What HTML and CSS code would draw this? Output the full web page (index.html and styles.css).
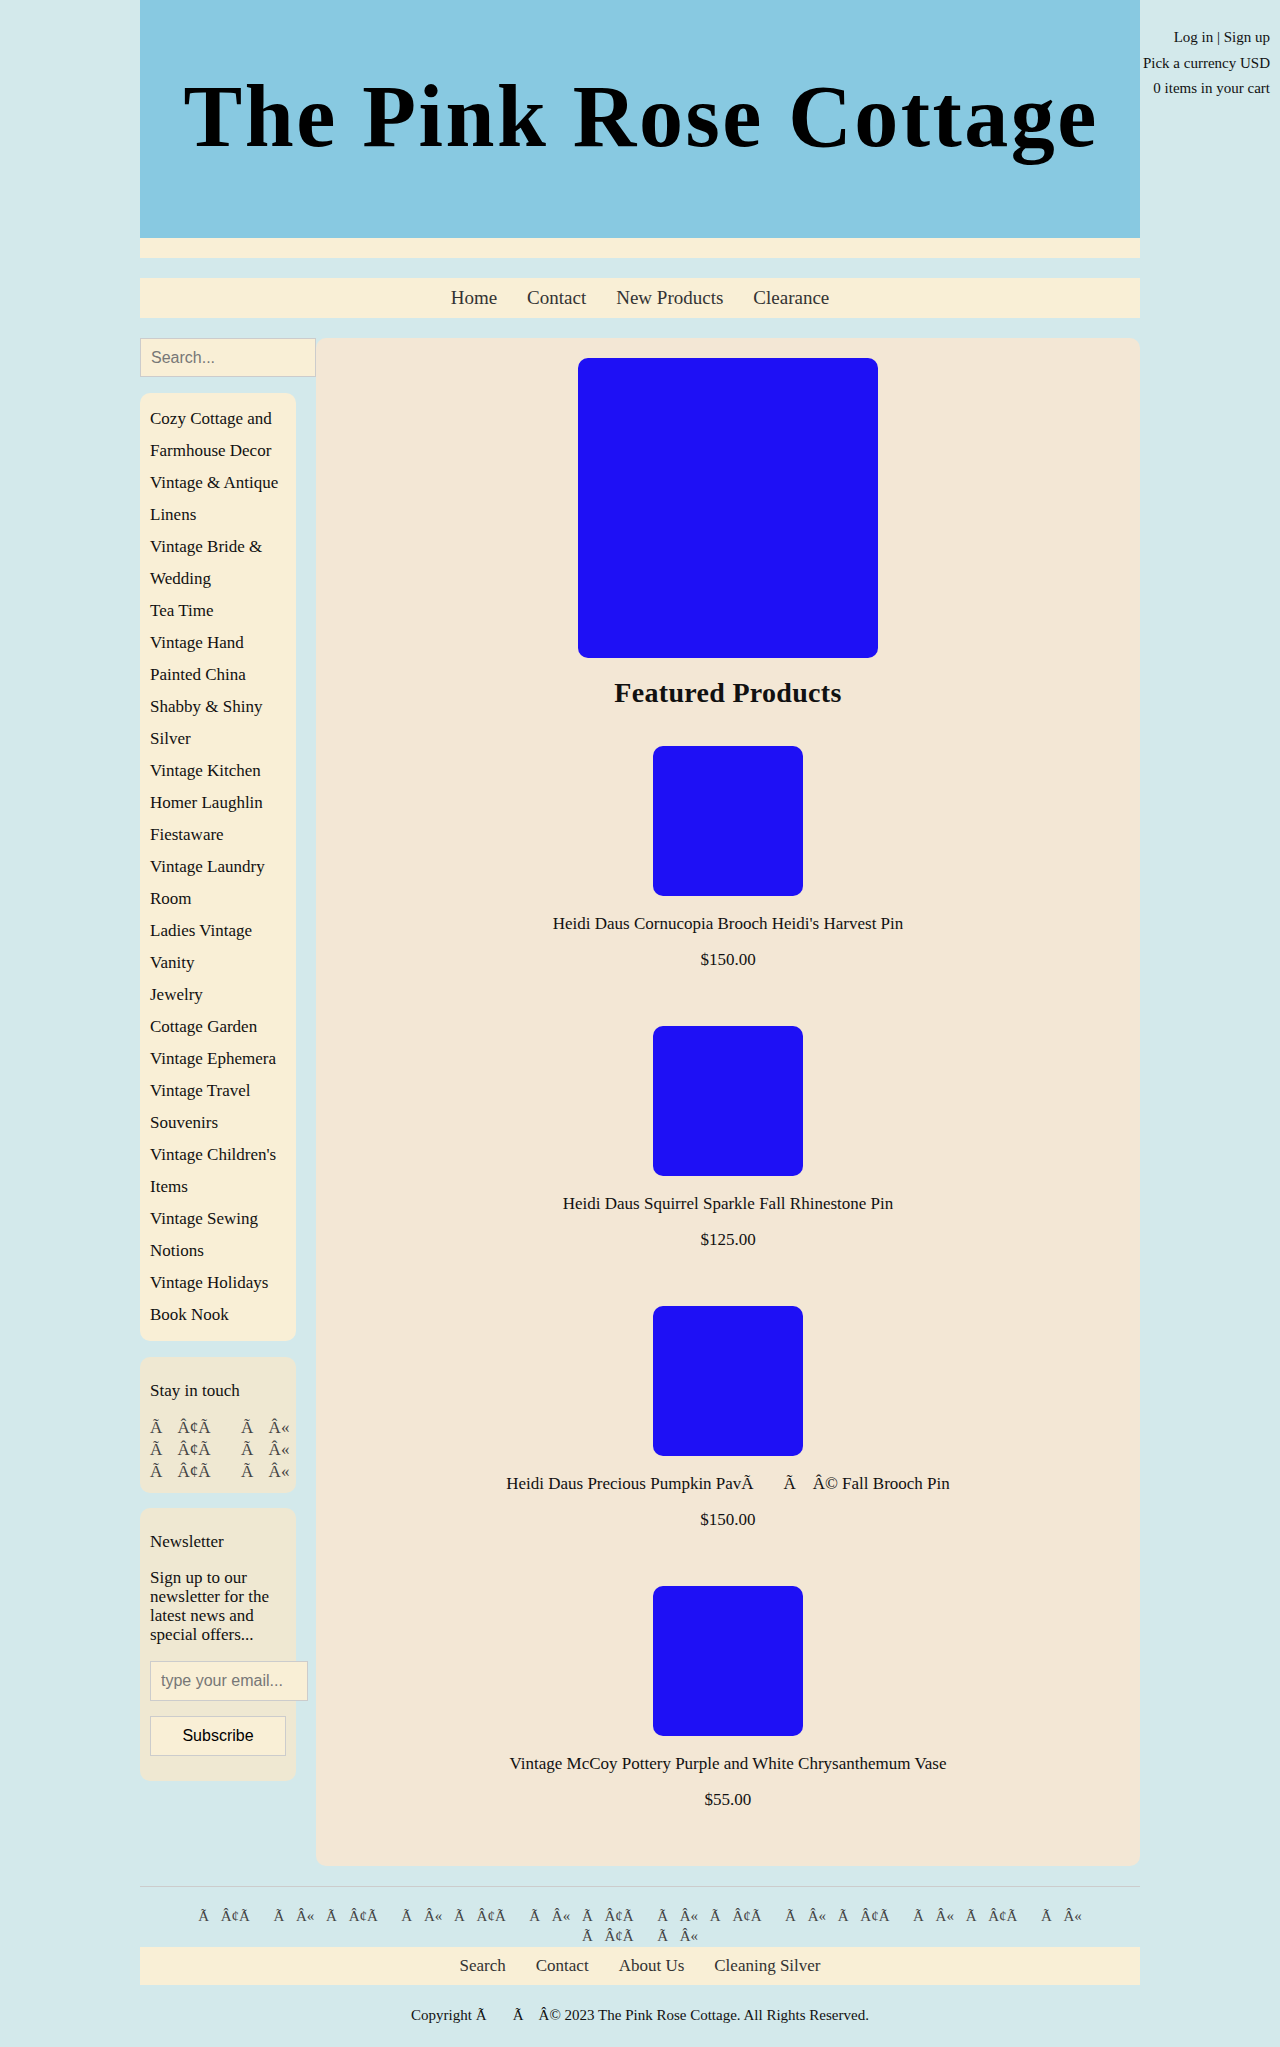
FILE: index.html
```html
<!DOCTYPE html>
<html lang="en">
<head>
<meta charset="utf-8">
<title>The Pink Rose Cottage</title>
<link rel="stylesheet" href="styles.css">
</head>
<body>
<div class="account">
  <p><a href="#">Log in</a> | <a href="#">Sign up</a></p>
  <p>Pick a currency USD</p>
  <p>0 items in your cart</p>
</div>
<div class="page">
  <header class="masthead">
    <div class="banner"><h1 class="site-title">The Pink Rose Cottage</h1></div>
    <div class="strip"></div>
  </header>
  <nav class="topnav">
    <a href="#">Home</a>
    <a href="#">Contact</a>
    <a href="#">New Products</a>
    <a href="#">Clearance</a>
  </nav>
  <div class="layout">
    <aside class="sidebar">
      <input class="search" type="text" placeholder="Search...">
      <ul class="box cats">
        <li><a href="#">Cozy Cottage and Farmhouse Decor</a></li>
        <li><a href="#">Vintage &amp; Antique Linens</a></li>
        <li><a href="#">Vintage Bride &amp; Wedding</a></li>
        <li><a href="#">Tea Time</a></li>
        <li><a href="#">Vintage Hand Painted China</a></li>
        <li><a href="#">Shabby &amp; Shiny Silver</a></li>
        <li><a href="#">Vintage Kitchen</a></li>
        <li><a href="#">Homer Laughlin Fiestaware</a></li>
        <li><a href="#">Vintage Laundry Room</a></li>
        <li><a href="#">Ladies Vintage Vanity</a></li>
        <li><a href="#">Jewelry</a></li>
        <li><a href="#">Cottage Garden</a></li>
        <li><a href="#">Vintage Ephemera</a></li>
        <li><a href="#">Vintage Travel Souvenirs</a></li>
        <li><a href="#">Vintage Children's Items</a></li>
        <li><a href="#">Vintage Sewing Notions</a></li>
        <li><a href="#">Vintage Holidays</a></li>
        <li><a href="#">Book Nook</a></li>
      </ul>
      <section class="box alt">
        <h3 class="box-title">Stay in touch</h3>
        <div class="social">
          <a class="moj" href="#">Ã&nbsp;Â¢Ã&nbsp;&nbsp;Ã&nbsp;Â«</a>
          <a class="moj" href="#">Ã&nbsp;Â¢Ã&nbsp;&nbsp;Ã&nbsp;Â«</a>
          <a class="moj" href="#">Ã&nbsp;Â¢Ã&nbsp;&nbsp;Ã&nbsp;Â«</a>
        </div>
      </section>
      <section class="box alt newsletter">
        <h3 class="box-title">Newsletter</h3>
        <p class="news-text">Sign up to our newsletter for the latest news and special offers...</p>
        <input class="email" type="text" placeholder="type your email...">
        <button class="subscribe" type="button">Subscribe</button>
      </section>
    </aside>
    <main class="content">
      <div class="hero"></div>
      <h2 class="section-title">Featured Products</h2>
      <div class="product">
        <div class="thumb"></div>
        <p class="pname">Heidi Daus Cornucopia Brooch Heidi's Harvest Pin</p>
        <p class="price">$150.00</p>
      </div>
      <div class="product">
        <div class="thumb"></div>
        <p class="pname">Heidi Daus Squirrel Sparkle Fall Rhinestone Pin</p>
        <p class="price">$125.00</p>
      </div>
      <div class="product">
        <div class="thumb"></div>
        <p class="pname">Heidi Daus Precious Pumpkin PavÃ&nbsp;&nbsp;&nbsp;&nbsp;&nbsp;&nbsp;&nbsp;Ã&nbsp;&nbsp;&nbsp;&nbsp;Â© Fall Brooch Pin</p>
        <p class="price">$150.00</p>
      </div>
      <div class="product">
        <div class="thumb"></div>
        <p class="pname">Vintage McCoy Pottery Purple and White Chrysanthemum Vase</p>
        <p class="price">$55.00</p>
      </div>
    </main>
  </div>
  <footer class="site-footer">
    <div class="ficons"><span class="moj">Ã&nbsp;Â¢Ã&nbsp;&nbsp;Ã&nbsp;Â«</span> <span class="moj">Ã&nbsp;Â¢Ã&nbsp;&nbsp;Ã&nbsp;Â«</span> <span class="moj">Ã&nbsp;Â¢Ã&nbsp;&nbsp;Ã&nbsp;Â«</span> <span class="moj">Ã&nbsp;Â¢Ã&nbsp;&nbsp;Ã&nbsp;Â«</span> <span class="moj">Ã&nbsp;Â¢Ã&nbsp;&nbsp;Ã&nbsp;Â«</span> <span class="moj">Ã&nbsp;Â¢Ã&nbsp;&nbsp;Ã&nbsp;Â«</span> <span class="moj">Ã&nbsp;Â¢Ã&nbsp;&nbsp;Ã&nbsp;Â«</span> <span class="moj">Ã&nbsp;Â¢Ã&nbsp;&nbsp;Ã&nbsp;Â«</span></div>
    <nav class="fnav">
      <a href="#">Search</a>
      <a href="#">Contact</a>
      <a href="#">About Us</a>
      <a href="#">Cleaning Silver</a>
    </nav>
    <p class="copyright">Copyright Ã&nbsp;&nbsp;&nbsp;&nbsp;&nbsp;&nbsp;&nbsp;Ã&nbsp;&nbsp;&nbsp;&nbsp;Â© 2023 The Pink Rose Cottage. All Rights Reserved.</p>
  </footer>
</div>
</body>
</html>
```

FILE: styles.css
```css
body {
  margin: 0;
  background: #d3e9eb;
  font-family: "Liberation Serif", "Times New Roman", serif;
  font-size: 17px;
  color: #111;
}

.page {
  width: 1000px;
  margin: 0 auto;
}

/* account links (top right, outside the page column) */
.account {
  position: absolute;
  top: 25px;
  right: 10px;
  text-align: right;
  font-size: 15px;
  line-height: 25.5px;
  color: #111;
}
.account p { margin: 0; }
.account a { color: #111; text-decoration: none; }

/* masthead */
.banner {
  background: #88c9e1;
  height: 238px;
  box-sizing: border-box;
  padding-top: 73px;
}
.site-title {
  margin: 0;
  text-align: center;
  font-size: 88px;
  line-height: 88px;
  font-weight: bold;
  letter-spacing: 2.5px;
  padding-left: 2.5px;
  color: #000;
}
.strip {
  height: 20px;
  background: #f9efd6;
}

/* top navigation */
.topnav {
  margin-top: 20px;
  height: 40px;
  background: #f9efd6;
  display: flex;
  justify-content: center;
  gap: 30px;
  font-size: 19px;
  line-height: 40px;
}
.topnav a { color: #333; text-decoration: none; }

/* two-column layout */
.layout {
  display: flex;
  align-items: flex-start;
  margin-top: 20px;
}
.sidebar {
  width: 176px;
  flex: none;
}
.search {
  display: block;
  width: 176px;
  height: 39px;
  box-sizing: border-box;
  margin: 0;
  border: 1px solid #ccc;
  background: #f9efd6;
  padding: 0 10px;
  font: 16px "Liberation Sans", Arial, sans-serif;
  color: #333;
}
.search::placeholder, .email::placeholder { color: #777; }

.box {
  width: 156px;
  box-sizing: border-box;
  padding: 10px;
  border-radius: 10px;
  background: #f9efd6;
  margin: 16px 0 0;
}
.box.alt { background: #efe8d2; }
.newsletter { margin-top: 15px; }

.cats {
  list-style: none;
  line-height: 32px;
}
.cats a { color: #111; text-decoration: none; }

.box-title {
  font-size: 17px;
  font-weight: normal;
  line-height: 20px;
  margin: 14px 0 16px;
}
.social .moj {
  display: block;
  line-height: 22px;
  color: #444;
  text-decoration: none;
  word-spacing: 11px;
  white-space: nowrap;
}

.news-text {
  margin: 0 0 17px;
  line-height: 19px;
}
.email {
  display: block;
  width: 158px;
  height: 40px;
  box-sizing: border-box;
  margin: 0 0 15px;
  border: 1px solid #ccc;
  background: #f9efd6;
  padding: 0 10px;
  font: 16px "Liberation Sans", Arial, sans-serif;
}
.subscribe {
  display: block;
  width: 136px;
  height: 40px;
  box-sizing: border-box;
  margin: 0 0 15px;
  border: 1px solid #ccc;
  background: #f9efd6;
  font: 16px "Liberation Sans", Arial, sans-serif;
  color: #000;
}

/* main content */
.content {
  flex: 1;
  background: #f3e7d5;
  border-radius: 10px;
  padding: 20px 0 0;
  display: flex;
  flex-direction: column;
  align-items: center;
}
.hero {
  width: 300px;
  height: 300px;
  border-radius: 10px;
  background: #1e10f5;
}
.section-title {
  margin: 19px 0 37px;
  font-size: 28px;
  line-height: 32px;
  letter-spacing: 0.3px;
}
.product {
  display: flex;
  flex-direction: column;
  align-items: center;
  text-align: center;
  margin-bottom: 56px;
}
.thumb {
  width: 150px;
  height: 150px;
  border-radius: 10px;
  background: #1e10f5;
}
.pname {
  margin: 18px 0 0;
  line-height: 20px;
}
.price {
  margin: 16px 0 0;
  line-height: 20px;
}

/* footer */
.site-footer {
  margin-top: 20px;
  border-top: 1px solid #ccc;
  padding-top: 19px;
  text-align: center;
}
.ficons {
  font-size: 15px;
  line-height: 20px;
  color: #444;
  word-spacing: 8px;
}
.ficons .moj { white-space: nowrap; }
.fnav {
  margin-top: 1px;
  height: 38px;
  line-height: 38px;
  background: #f9efd6;
  display: flex;
  justify-content: center;
  gap: 30px;
}
.fnav a { color: #333; text-decoration: none; }
.copyright {
  margin: 20px 0 0;
  padding-bottom: 20px;
  font-size: 15px;
  line-height: 20px;
}
```
